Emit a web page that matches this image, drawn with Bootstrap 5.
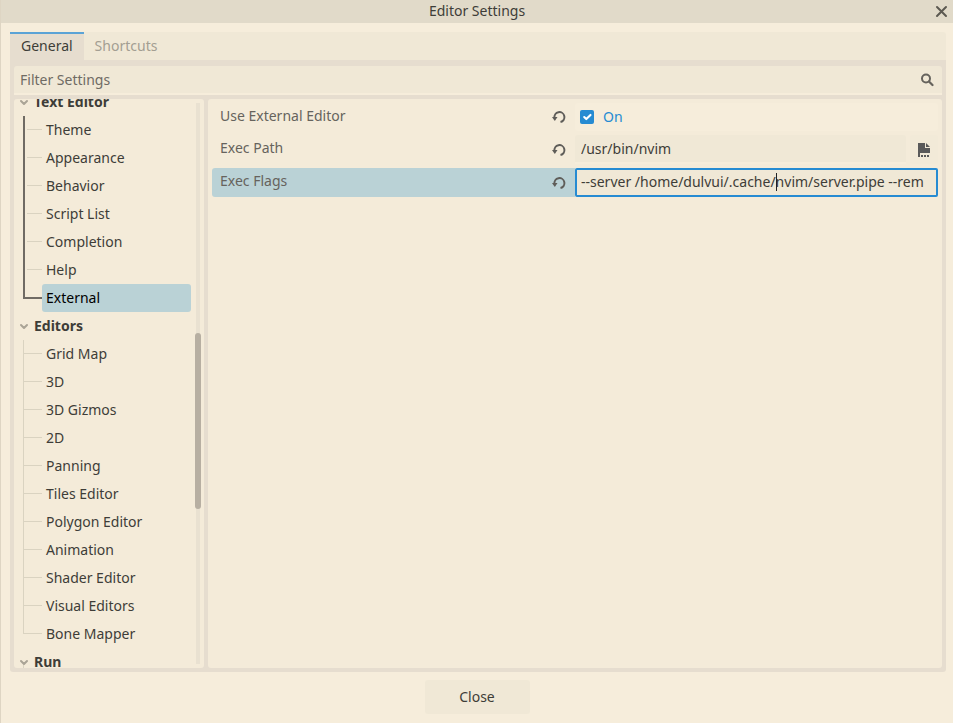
<!DOCTYPE html>
<html lang="en">
<head>
<meta charset="utf-8">
<meta name="viewport" content="width=device-width, initial-scale=1">
<title>Editor Settings</title>
<link href="https://cdn.jsdelivr.net/npm/bootstrap@5.3.0/dist/css/bootstrap.min.css" rel="stylesheet">
<style>
:root{--base:#f6eddb;--panel:#f4ebd9;--frame:#e6ddcf;--field:#f0e8d6;--bar:#e1dac9;--ink:#3e3d38;--soft:#66635d;--blue:#268bd2;--pick:#bad2d6;--twig:#dad3c1;--trunk:#706b64}
body{font-family:"Noto Sans",sans-serif;font-size:14px;line-height:20px;color:var(--ink);background:var(--base)}
button,input{font:inherit;color:inherit}
svg{display:block;flex:none}
.dialog{border-left:1px solid #ded5c3}
.titlebar{height:23px;background:var(--bar)}
.titlebar h1{font-size:14px;line-height:20px;padding-bottom:2px}
.plain{border:0;background:none;padding:0;color:inherit}
.dialog-body{padding:9px 7px 0 9px}
.tabs{height:28px;background:var(--field);border-radius:0 3px 0 0}
.tabs .nav-link{padding:4px 11px;border:0;border-radius:0;background:none;color:#a39e92;line-height:20px;height:28px}
.tabs .nav-link.active{background:var(--frame);color:var(--ink);border-top:2px solid #5ba3d6;padding-top:2px}
.frame{background:var(--frame);padding:6px 4px 4px;border-radius:0 0 3px 3px}
.search{background:var(--field);height:29px;border-bottom:2px solid var(--base);border-radius:3px 3px 0 0;padding:0 8px 0 6px;margin-bottom:4px;color:var(--soft)}
.search input,.field{border:0;background:none;outline:0;padding:0}
.search input::placeholder{color:#6f6b64;opacity:1}
.panes{gap:4px}
.pane{background:var(--panel);border-radius:3px}
.side{width:190px;padding-left:9px}
.tree{margin-top:-11px}
.tree ul{margin:0;padding:0;list-style:none}
.group{height:28px;width:100%;font-weight:700;margin-left:-4px}
.group svg{margin-right:5px;color:#aaa496}
.stub{background:linear-gradient(var(--twig),var(--twig)) 4px 17px/1px 11px no-repeat}
.leaf{height:28px;padding-left:19px;background:linear-gradient(var(--twig),var(--twig)) 0 0/1px 100% no-repeat,linear-gradient(var(--twig),var(--twig)) 0 13px/19px 1px no-repeat}
.leaf:last-child{background-size:1px 14px,19px 1px}
.active-branch .leaf{background:linear-gradient(var(--trunk),var(--trunk)) 0 0/2px 100% no-repeat,linear-gradient(var(--twig),var(--twig)) 4px 13px/15px 1px no-repeat}
.active-branch .leaf:last-child{background:linear-gradient(var(--trunk),var(--trunk)) 0 0/2px 15px no-repeat,linear-gradient(var(--trunk),var(--trunk)) 0 13px/19px 2px no-repeat}
.leaf button{height:28px;width:100%;padding:0 4px;border-radius:3px}
.leaf .chosen{background:var(--pick);color:#000}
.scroller{width:13px;padding:4px 3px 4px 4px}
.track{width:6px;background:linear-gradient(#e9e1d1,#e9e1d1) 1px 0/4px 100% no-repeat}
.thumb{height:176px;margin-top:230px;background:#b7afa2;border-radius:3px}
.props{padding:4px;gap:4px}
.prop{height:29px}
.prop:first-child{height:28px}
.prop label,.prop .prop-name{padding:0 8px 2px;color:var(--soft)}
.prop label{padding-bottom:4px}
.revert{padding:0 9px;height:29px;color:#5f5d59}
.half{flex:1 1 0;width:50%;min-width:0}
.now .half:first-child{background:var(--pick);border-radius:3px 0 0 3px}
.pair{flex:0 0 50%}
.toggle{background:var(--base);border-radius:3px;padding-left:5px;gap:9px}
.toggle .form-check-input{width:14px;height:14px;margin:0;border-radius:2px;border:0;background-color:var(--blue);box-shadow:none}
.prop .toggle label{padding:0;color:var(--blue)}
.field{background:var(--field);border-bottom:2px solid var(--base);padding:0 6px;height:29px;border-radius:3px 3px 0 0}
.now .field{border:2px solid var(--blue);padding:0 4px 2px;border-radius:2px}
.caret{left:201px;top:5px;width:1px;height:18px;background:#222}
.browse{width:28px;height:29px;margin-left:4px;background:#f2ead8;border-radius:3px;color:#5a5a5a}
.dialog-foot{padding:8px 0 9px}
.close-action{width:105px;height:34px;background:var(--field);border-radius:3px;padding:0;font-size:14px;line-height:20px;color:var(--ink)}
</style>
<script src="https://cdn.jsdelivr.net/npm/bootstrap@5.3.0/dist/js/bootstrap.bundle.min.js" defer></script>
</head>
<body>
<main class="dialog d-flex flex-column vh-100 overflow-hidden">
  <header class="titlebar d-flex align-items-center flex-shrink-0">
    <h1 class="flex-grow-1 text-center mb-0 fw-normal ps-4">Editor Settings</h1>
    <button class="plain pe-1" type="button" aria-label="Close window"><svg width="20" height="16" viewBox="0 0 20 16" fill="none" stroke="#5c5951" stroke-width="2" stroke-linecap="round"><path d="M8 3l9 9M17 3l-9 9"/></svg></button>
  </header>
  <div class="dialog-body d-flex flex-column flex-grow-1 overflow-hidden">
    <div class="tabs nav flex-shrink-0" role="tablist">
      <button class="nav-link active" type="button" role="tab" aria-selected="true">General</button>
      <button class="nav-link" type="button" role="tab" aria-selected="false">Shortcuts</button>
    </div>
    <div class="frame d-flex flex-column flex-grow-1 overflow-hidden">
      <div class="search d-flex align-items-center flex-shrink-0">
        <input class="flex-grow-1" type="text" placeholder="Filter Settings" aria-label="Filter Settings">
        <svg width="14" height="14" viewBox="0 0 14 14" fill="none" stroke="currentColor" stroke-width="2"><circle cx="6" cy="5.500" r="4"/><path d="M9 8.500l3.500 3.500" stroke-width="2.200" stroke-linecap="round"/></svg>
      </div>
      <div class="panes d-flex flex-grow-1 overflow-hidden">
        <nav class="pane side d-flex flex-shrink-0 overflow-hidden" aria-label="Sections">
          <div class="tree flex-grow-1">
            <button class="plain group d-flex align-items-center" type="button"><svg width="10" height="10" viewBox="0 0 10 10" fill="none" stroke="currentColor" stroke-width="2" stroke-linecap="round" stroke-linejoin="round"><path d="M2 4l3 3 3-3"/></svg>Text Editor</button>
            <ul class="active-branch">
              <li class="leaf"><button class="plain text-start" type="button">Theme</button></li>
              <li class="leaf"><button class="plain text-start" type="button">Appearance</button></li>
              <li class="leaf"><button class="plain text-start" type="button">Behavior</button></li>
              <li class="leaf"><button class="plain text-start" type="button">Script List</button></li>
              <li class="leaf"><button class="plain text-start" type="button">Completion</button></li>
              <li class="leaf"><button class="plain text-start" type="button">Help</button></li>
              <li class="leaf"><button class="plain text-start chosen" type="button" aria-current="true">External</button></li>
            </ul>
            <button class="plain group d-flex align-items-center" type="button"><svg width="10" height="10" viewBox="0 0 10 10" fill="none" stroke="currentColor" stroke-width="2" stroke-linecap="round" stroke-linejoin="round"><path d="M2 4l3 3 3-3"/></svg>Editors</button>
            <ul>
              <li class="leaf"><button class="plain text-start" type="button">Grid Map</button></li>
              <li class="leaf"><button class="plain text-start" type="button">3D</button></li>
              <li class="leaf"><button class="plain text-start" type="button">3D Gizmos</button></li>
              <li class="leaf"><button class="plain text-start" type="button">2D</button></li>
              <li class="leaf"><button class="plain text-start" type="button">Panning</button></li>
              <li class="leaf"><button class="plain text-start" type="button">Tiles Editor</button></li>
              <li class="leaf"><button class="plain text-start" type="button">Polygon Editor</button></li>
              <li class="leaf"><button class="plain text-start" type="button">Animation</button></li>
              <li class="leaf"><button class="plain text-start" type="button">Shader Editor</button></li>
              <li class="leaf"><button class="plain text-start" type="button">Visual Editors</button></li>
              <li class="leaf"><button class="plain text-start" type="button">Bone Mapper</button></li>
            </ul>
            <button class="plain group stub d-flex align-items-center" type="button"><svg width="10" height="10" viewBox="0 0 10 10" fill="none" stroke="currentColor" stroke-width="2" stroke-linecap="round" stroke-linejoin="round"><path d="M2 4l3 3 3-3"/></svg>Run</button>
          </div>
          <div class="scroller d-flex flex-shrink-0"><div class="track"><div class="thumb"></div></div></div>
        </nav>
        <section class="pane flex-grow-1 overflow-hidden" aria-label="External editor">
          <div class="props d-flex flex-column">
            <div class="prop d-flex">
              <div class="pair d-flex align-items-center"><span class="prop-name flex-grow-1" id="use-name">Use External Editor</span>
                <button class="plain revert" type="button" aria-label="Revert Use External Editor"><svg width="14" height="14" viewBox="0 0 14 14"><path d="M2.500 8a5 5 0 1 1 6 4" fill="none" stroke="currentColor" stroke-width="2"/><path d="M0 7h5.500l-2.700 4z" fill="currentColor"/></svg></button></div>
              <div class="pair toggle d-flex align-items-center"><input class="form-check-input" type="checkbox" id="use" checked aria-describedby="use-name"><label for="use">On</label></div>
            </div>
            <div class="prop d-flex">
              <div class="pair d-flex align-items-center"><label class="flex-grow-1" for="path">Exec Path</label>
                <button class="plain revert" type="button" aria-label="Revert Exec Path"><svg width="14" height="14" viewBox="0 0 14 14"><path d="M2.500 8a5 5 0 1 1 6 4" fill="none" stroke="currentColor" stroke-width="2"/><path d="M0 7h5.500l-2.700 4z" fill="currentColor"/></svg></button></div>
              <div class="pair d-flex"><input class="field half" type="text" id="path" value="/usr/bin/nvim">
                <button class="plain browse d-flex align-items-center justify-content-center" type="button" aria-label="Browse"><svg width="14" height="16" viewBox="0 0 14 16" fill="currentColor"><path d="M1 1h7v5h5v5H3v4H1zM9 1l4 4H9zM4 13h2v2H4zM7 13h2v2H7zM10 13h2v2h-2z"/></svg></button></div>
            </div>
            <div class="prop now d-flex">
              <div class="half pair d-flex align-items-center"><label class="flex-grow-1" for="flags">Exec Flags</label>
                <button class="plain revert" type="button" aria-label="Revert Exec Flags"><svg width="14" height="14" viewBox="0 0 14 14"><path d="M2.500 8a5 5 0 1 1 6 4" fill="none" stroke="currentColor" stroke-width="2"/><path d="M0 7h5.500l-2.700 4z" fill="currentColor"/></svg></button></div>
              <div class="pair position-relative"><input class="field w-100" type="text" id="flags" value="--server /home/dulvui/.cache/nvim/server.pipe --rem"><span class="caret position-absolute"></span></div>
            </div>
          </div>
        </section>
      </div>
    </div>
  </div>
  <footer class="dialog-foot d-flex justify-content-center flex-shrink-0"><button class="btn close-action" type="button">Close</button></footer>
</main>
</body>
</html>
